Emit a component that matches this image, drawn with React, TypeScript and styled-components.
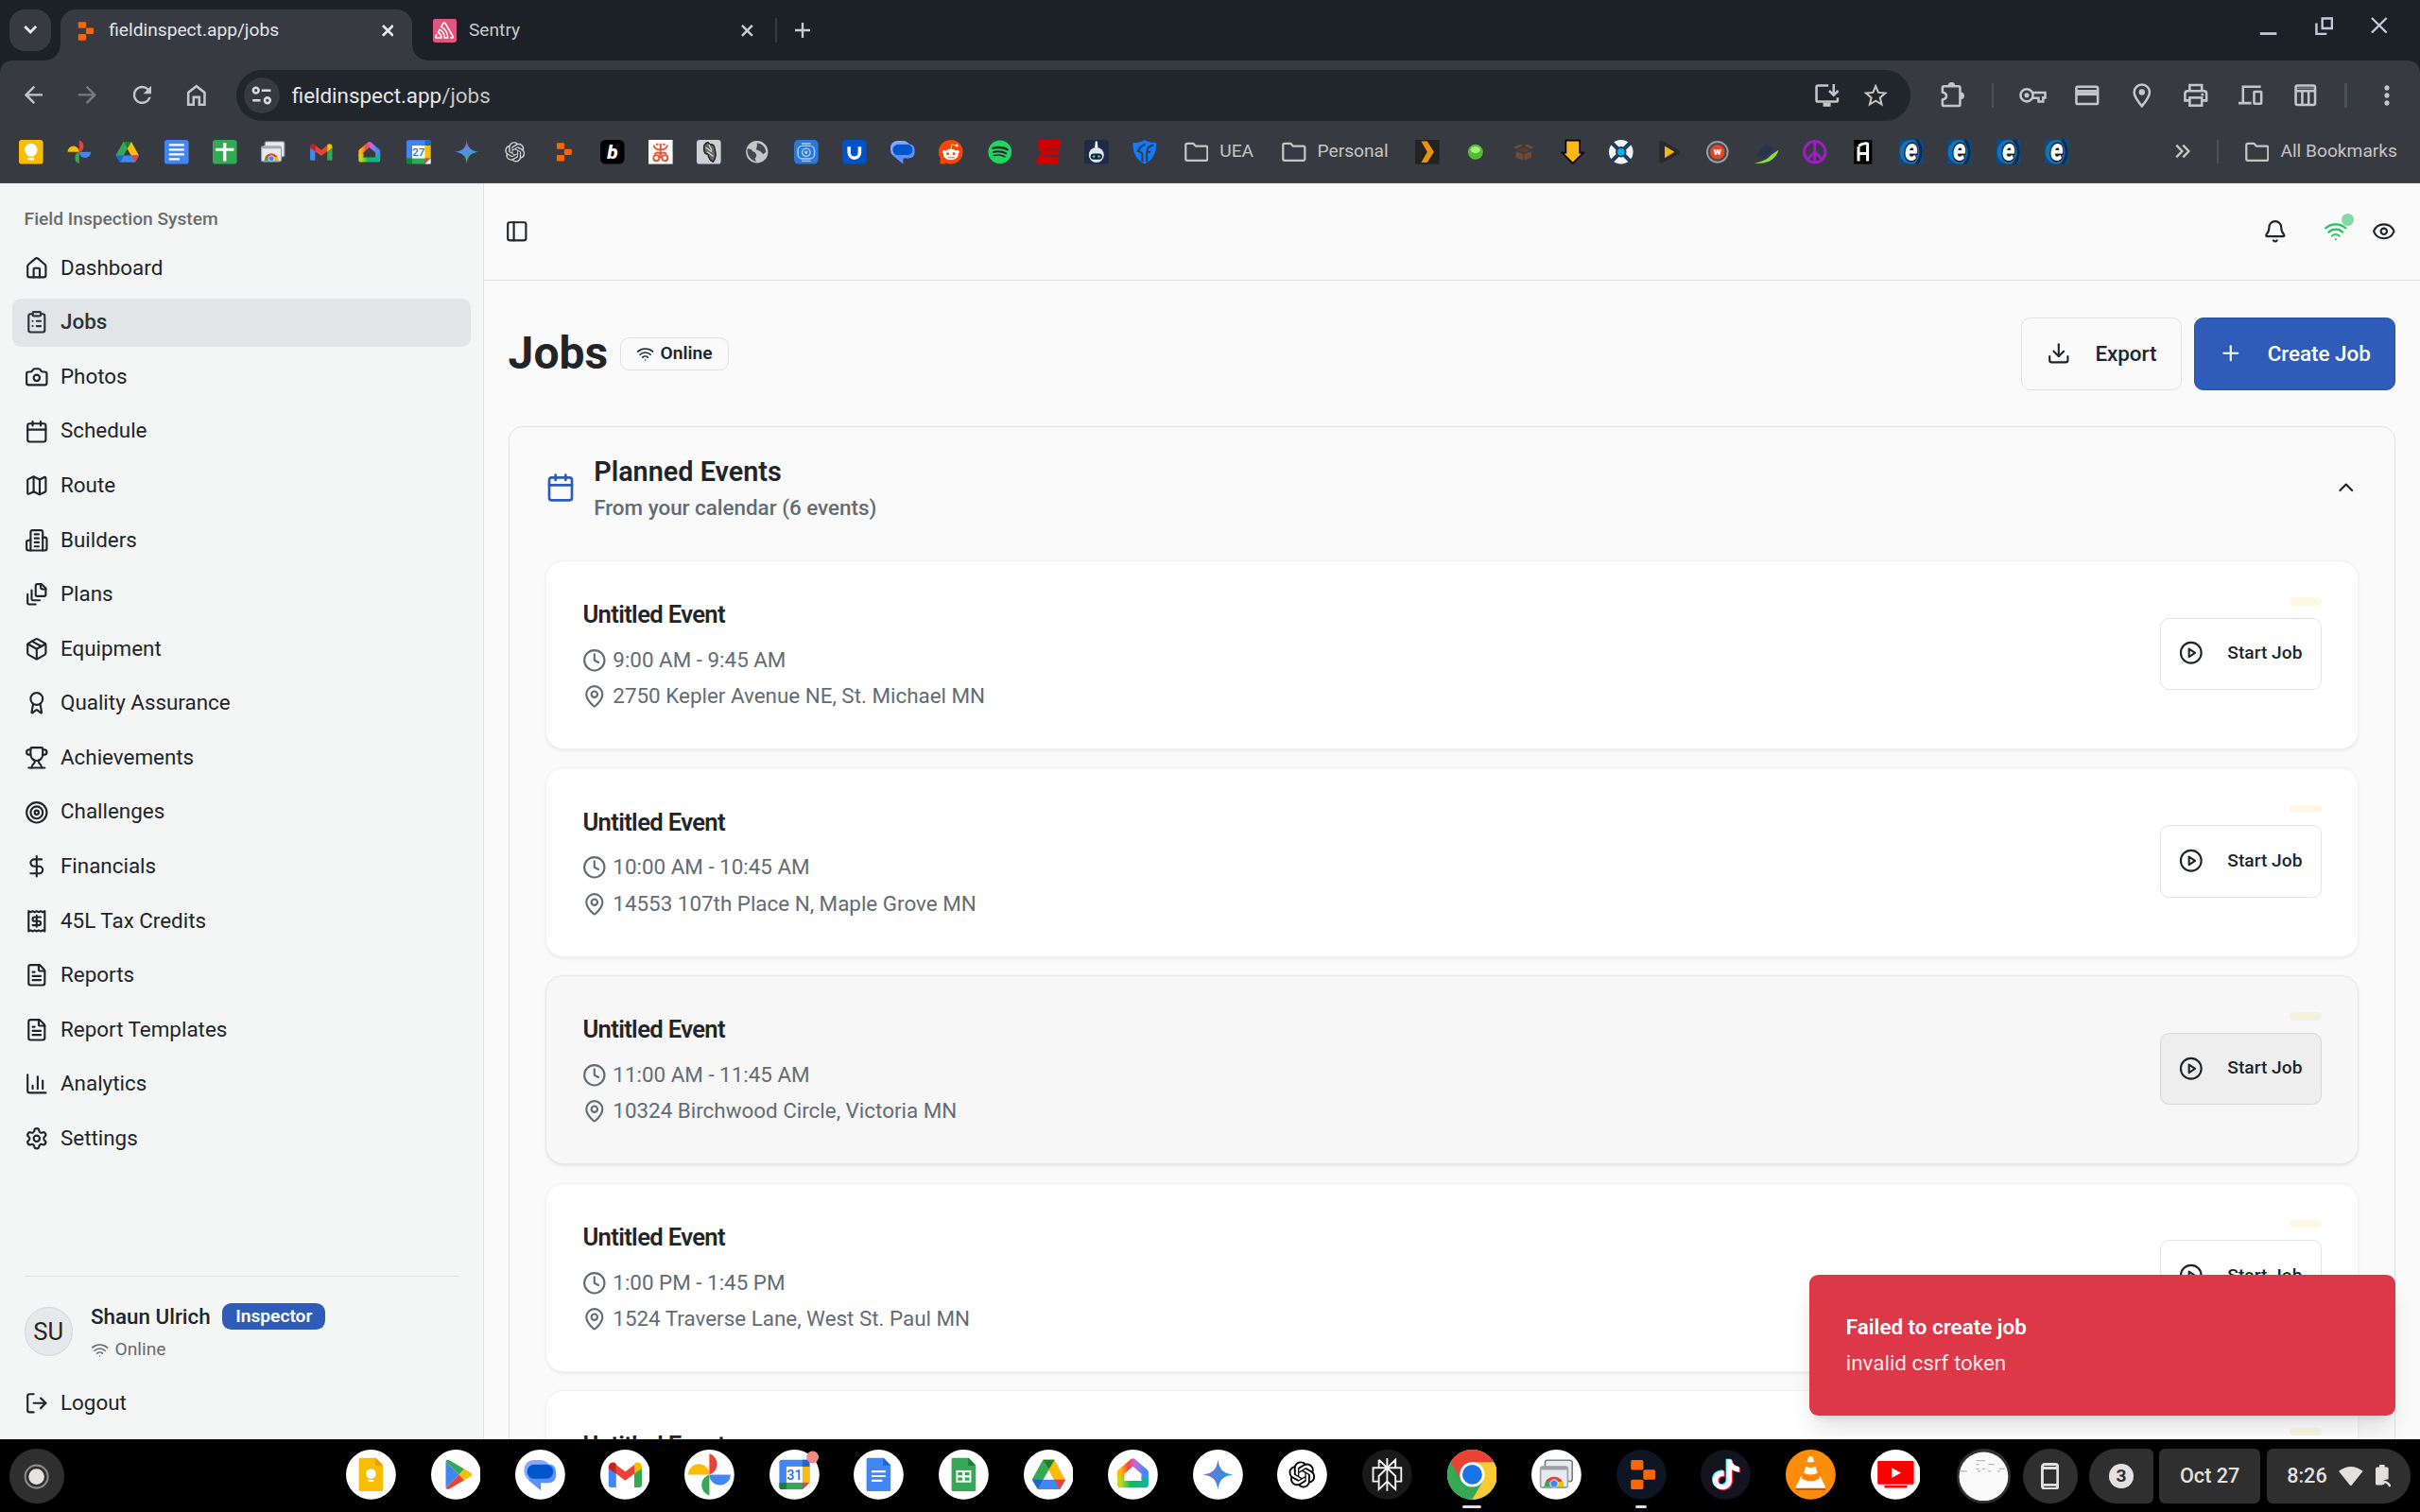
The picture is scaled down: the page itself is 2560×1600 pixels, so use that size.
import React from 'react';
import styled, { createGlobalStyle, css } from 'styled-components';
import {
  Award, Bell, Calendar, Camera, ChartColumn, ChevronUp, ClipboardList, Clock, DollarSign, Download, Eye,
  FileStack, FileText, House, LogOut, Map as MapIcon, MapPin, Package, PanelLeft, Plus, Settings, Target, Trophy, Wifi,
} from 'lucide-react';
import {
  MdArrowBack, MdArrowForward, MdRefresh, MdStarBorder, MdMoreVert,
} from 'react-icons/md';
import { RiOpenaiFill } from 'react-icons/ri';
import { SiSentry, SiTiktok } from 'react-icons/si';
import { FaRedditAlien, FaSpotify } from 'react-icons/fa';

const FONT = `Roboto, "Noto Sans", "Liberation Sans", sans-serif`;
const INK = '#212529';
const MUTED = '#636c75';
const LINE = '#dfe1e4';
const BLUE = '#2e5cb8';

/* Sizes are in the 1600x1000 logical pixels of the display; the page is scaled 1.6x. */
const GlobalStyle = createGlobalStyle`
  html, body { margin: 0; padding: 0; background: #000; }
  *, *::before, *::after { box-sizing: border-box; }
  svg { display: block; flex: none; }
  button { font: inherit; color: inherit; margin: 0; cursor: pointer; }
`;

const Screen = styled.div`
  zoom: 1.6;
  width: 1600px;
  height: 1000px;
  display: flex;
  flex-direction: column;
  overflow: hidden;
  font-family: ${FONT};
  font-size: 14px;
  line-height: 20px;
  color: ${INK};
  background: #1c2027;
`;

/* ---------- browser: tab strip ---------- */

const TabStrip = styled.div`
  height: 40px;
  flex: none;
  display: flex;
  align-items: flex-end;
  padding-left: 6px;
  background: #1c2027;
  color: #c7cad1;
  font-size: 12px;
`;

const TabSearch = styled.button`
  width: 28px;
  height: 28px;
  margin: 0 6px 6px 0;
  padding: 0;
  border: 0;
  border-radius: 10px;
  display: grid;
  place-items: center;
  background: #373a41;
  color: #e6e8ec;
`;

const TabBox = styled.div<{ $active?: boolean }>`
  position: relative;
  height: 34px;
  display: flex;
  align-items: center;
  padding-bottom: 5.4px;
  ${(p) =>
    p.$active
      ? css`
          width: 232.3px;
          padding-left: 8px;
          padding-right: 12px;
          padding-top: 0;
          background: #373a41;
          color: #e3e5ea;
          border-radius: 10px 10px 0 0;
          &::before, &::after {
            content: '';
            position: absolute;
            bottom: 0;
            width: 10px;
            height: 10px;
          }
          &::before { left: -10px; background: radial-gradient(circle at 0 0, transparent 9.6px, #373a41 10px); }
          &::after { right: -10px; background: radial-gradient(circle at 100% 0, transparent 9.6px, #373a41 10px); }
        `
      : css`
          width: 240px;
          padding-left: 13.7px;
          padding-right: 14px;
        `}
`;

const TabTitle = styled.span`
  flex: 1;
  margin-left: 8px;
  white-space: nowrap;
`;

const SentryBadge = styled.span`
  width: 16px;
  height: 16px;
  border-radius: 1.5px;
  display: grid;
  place-items: center;
  background: #e1567c;
  color: #fff;
`;

const StripDivider = styled.span`
  width: 1.5px;
  height: 16px;
  margin: 0 12px 12px 0;
  background: #363a42;
`;

const NewTab = styled.span`
  margin-bottom: 15px;
`;

const WindowControls = styled.div`
  margin-left: auto;
  align-self: flex-start;
  display: flex;
  gap: 25px;
  padding: 11px 21.3px 0 0;
  color: #c3cbdc;
`;

/* ---------- browser: toolbar ---------- */

const Toolbar = styled.div`
  height: 46px;
  flex: none;
  display: flex;
  align-items: center;
  padding: 0 4px;
  background: #373a41;
  border-radius: 8px 8px 0 0;
  color: #c3c6cf;
`;

const ToolSlot = styled.span<{ $dim?: boolean }>`
  width: 36px;
  height: 36px;
  display: grid;
  place-items: center;
  color: ${(p) => (p.$dim ? '#777a80' : 'inherit')};
`;

const ToolDivider = styled.span<{ $w: number }>`
  width: ${(p) => p.$w}px;
  display: grid;
  place-items: center;
  &::before { content: ''; width: 1.5px; height: 16px; background: #4c5058; }
`;

const Omnibox = styled.div`
  flex: 1;
  height: 34px;
  margin: 0 10px 0 8px;
  padding: 0 13.5px 0 5px;
  display: flex;
  align-items: center;
  border-radius: 17px;
  background: #21252c;
  color: #c7c5c4;
  font-size: 14px;
`;

const SiteInfo = styled.span`
  width: 24px;
  height: 24px;
  margin-right: 8px;
  border-radius: 12px;
  display: grid;
  place-items: center;
  background: #373a41;
  color: #d9dadd;
`;

const Url = styled.span`
  flex: 1;
  color: #e8e8ea;
  span { color: #c5c6c9; }
`;

const OmniActions = styled.span`
  display: flex;
  align-items: center;
  gap: 14px;
`;

/* ---------- browser: bookmarks ---------- */

const BookmarkBar = styled.div`
  height: 35.25px;
  flex: none;
  display: flex;
  align-items: center;
  gap: 16.03px;
  padding: 0 15px 6px 12.4px;
  background: #373a41;
  border-bottom: 1px solid #4b4948;
  color: #c7c5c4;
  font-size: 12px;
`;

const Folder = styled.span<{ $start?: number; $end?: number }>`
  display: flex;
  align-items: center;
  gap: 7.5px;
  margin-left: ${(p) => p.$start ?? 0}px;
  padding-right: ${(p) => p.$end ?? 0}px;
  white-space: nowrap;
`;

const BarEnd = styled.span`
  margin-left: auto;
  display: flex;
  align-items: center;
`;

const BarRule = styled.span`
  width: 1.5px;
  height: 16px;
  margin: 0 17.2px 0 17.6px;
  background: #4c5058;
`;

/* ---------- page ---------- */

const Page = styled.div`
  position: relative;
  flex: 1;
  min-height: 0;
  display: flex;
  overflow: hidden;
  background: #fafafa;
`;

const Sidebar = styled.aside`
  width: 320px;
  flex: none;
  display: flex;
  flex-direction: column;
  padding: 8px;
  background: #f4f6f5;
  border-right: 1px solid ${LINE};
`;

const GroupLabel = styled.div`
  height: 32px;
  padding: 0 8px;
  display: flex;
  align-items: center;
  font-size: 12px;
  font-weight: 500;
  color: #676c6f;
`;

const NavList = styled.nav`
  flex: 1;
  display: flex;
  flex-direction: column;
  gap: 4px;
`;

const NavItem = styled.a<{ $active?: boolean }>`
  height: 32px;
  padding: 0 8px;
  display: flex;
  align-items: center;
  gap: 8px;
  border-radius: 6px;
  font-weight: ${(p) => (p.$active ? 500 : 400)};
  color: ${(p) => (p.$active ? '#2d3338' : INK)};
  background: ${(p) => (p.$active ? '#e1e5e8' : 'transparent')};
  span { padding-bottom: 1.2px; }
`;

const UserRow = styled.div`
  margin: 0 8px;
  height: 68px;
  padding-top: 17px;
  display: flex;
  gap: 12px;
  border-top: 1px solid #e1e4e5;
`;

const Avatar = styled.div`
  width: 32px;
  height: 32px;
  margin-top: 3px;
  border-radius: 50%;
  border: 1px solid #d3d6d9;
  background: #e6e9ec;
  display: grid;
  place-items: center;
  font-size: 16px;
`;

const UserText = styled.div`
  display: flex;
  flex-direction: column;
  gap: 5px;
`;

const NameLine = styled.div`
  height: 18px;
  display: flex;
  align-items: center;
  gap: 8px;
  font-weight: 500;
`;

const RoleTag = styled.span`
  height: 17.5px;
  padding: 0 8.6px;
  border-radius: 6px;
  background: ${BLUE};
  color: #fff;
  font-size: 12px;
  font-weight: 600;
  line-height: 17px;
`;

const Status = styled.div`
  display: flex;
  align-items: center;
  gap: 4px;
  font-size: 12px;
  line-height: 16px;
  color: ${MUTED};
`;

const Main = styled.main`
  flex: 1;
  min-width: 0;
  display: flex;
  flex-direction: column;
`;

const TopBar = styled.header`
  height: 64.4px;
  flex: none;
  display: flex;
  align-items: center;
  padding: 0 16px 0 14px;
  border-bottom: 1px solid #dbdde1;
`;

const TopActions = styled.div`
  margin-left: auto;
  display: flex;
  align-items: center;
  gap: 16px;
`;

const BellSlot = styled.span`
  margin-right: 8px;
`;

const Connection = styled.span`
  position: relative;
  color: #22c55e;
  &::after {
    content: '';
    position: absolute;
    top: -4px;
    right: -4px;
    width: 8px;
    height: 8px;
    border-radius: 50%;
    background: #80dca2;
  }
`;

const Body = styled.div`
  flex: 1;
  min-height: 0;
  padding: 24.3px 16px 0;
  display: flex;
  flex-direction: column;
  gap: 24px;
  overflow: hidden;
`;

const TitleRow = styled.div`
  flex: none;
  display: flex;
  align-items: center;
  gap: 8px;
`;

const Title = styled.h1`
  margin: 0;
  padding-bottom: 1.2px;
  font-size: 30px;
  line-height: 36px;
  font-weight: 700;
`;

const OnlineTag = styled.span`
  height: 22px;
  margin-right: auto;
  padding: 0 10px;
  display: flex;
  align-items: center;
  gap: 4px;
  border: 1px solid ${LINE};
  border-radius: 6px;
  font-size: 12px;
  font-weight: 600;
`;

const Button = styled.button<{ $primary?: boolean; $small?: boolean; $pressed?: boolean }>`
  height: 48px;
  padding: 0 ${(p) => (p.$small ? 12 : 16)}px 0.8px ${(p) => (p.$small ? 12 : p.$primary ? 16 : 16.6)}px;
  display: flex;
  align-items: center;
  gap: 16px;
  white-space: nowrap;
  font-size: ${(p) => (p.$small ? 12 : 14)}px;
  font-weight: 500;
  border-radius: 6px;
  border: 1px solid ${(p) => (p.$primary ? '#294f9d' : p.$pressed ? '#d5d6d8' : '#e2e3e5')};
  background: ${(p) => (p.$primary ? BLUE : p.$pressed ? '#eeeeee' : 'transparent')};
  color: ${(p) => (p.$primary ? '#fff' : INK)};
`;

const Panel = styled.section`
  flex: none;
  border: 1px solid ${LINE};
  border-radius: 9px;
`;

const PanelHead = styled.div`
  padding: 16px 24px;
  display: flex;
  align-items: center;
  gap: 12px;
  color: ${INK};
`;

const PanelTitles = styled.div`
  flex: 1;
  padding-bottom: 1px;
  h2 { margin: 0; font-size: 18px; line-height: 27px; font-weight: 600; }
  p { margin: 0; font-weight: 500; color: ${MUTED}; }
`;

const EventList = styled.div`
  padding: 8px 24px 24px;
  display: flex;
  flex-direction: column;
  gap: 12px;
`;

const EventCard = styled.article<{ $hover?: boolean }>`
  display: flex;
  justify-content: space-between;
  padding: 24px 24px 25px;
  border-radius: 12px;
  border: 1px solid ${(p) => (p.$hover ? '#e6e7e8' : '#f0f1f2')};
  background: ${(p) => (p.$hover ? '#f7f7f7' : '#fff')};
  box-shadow: 0 1px 2px rgba(0, 0, 0, ${(p) => (p.$hover ? 0.08 : 0.06)});
`;

const EventTitle = styled.h3`
  margin: 0 0 8px;
  font-size: 16px;
  line-height: 23px;
  font-weight: 600;
  letter-spacing: -0.4px;
`;

const EventMeta = styled.div`
  display: flex;
  align-items: center;
  gap: 4px;
  color: ${MUTED};
  & + & { margin-top: 4px; }
  svg { margin-top: 1px; }
`;

const EventSide = styled.div`
  display: flex;
  flex-direction: column;
  align-items: flex-end;
  gap: 8px;
`;

const Pill = styled.span<{ $hover?: boolean }>`
  width: 21px;
  height: 5.3px;
  border-radius: 3px;
  background: ${(p) => (p.$hover ? '#f8f0de' : '#fff7e4')};
`;

const Toast = styled.div`
  position: absolute;
  right: 16px;
  bottom: 16px;
  width: 388px;
  height: 93px;
  padding: 24.5px;
  border-radius: 6px;
  background: #dd3848;
  color: #fff;
  box-shadow: 0 10px 15px -3px rgba(0, 0, 0, 0.12), 0 4px 6px -4px rgba(0, 0, 0, 0.12);
  strong { display: block; font-weight: 600; margin-bottom: 4px; }
  span { color: rgba(255, 255, 255, 0.88); }
`;

/* ---------- shelf ---------- */

const Shelf = styled.div`
  height: 48px;
  flex: none;
  display: flex;
  align-items: center;
  padding: 0 6px 0 6.4px;
  background: #000;
  border-top: 1px solid #0c0c0c;
  color: #e3e0e0;
  font-size: 13.5px;
  font-weight: 500;
`;

const Launcher = styled.span`
  width: 36px;
  height: 36px;
  border-radius: 50%;
  display: grid;
  place-items: center;
  background: #2f2f2f;
`;

const ShelfApps = styled.div`
  display: flex;
  gap: 23px;
  margin-left: 186.3px;
`;

const ShelfApp = styled.span<{ $mark?: number }>`
  position: relative;
  width: 33px;
  height: 33px;
  margin-bottom: 2px;
  ${(p) =>
    p.$mark &&
    css`
      &::after {
        content: '';
        position: absolute;
        left: calc(50% - ${p.$mark / 2}px);
        bottom: -5.5px;
        width: ${p.$mark}px;
        height: 2px;
        border-radius: 1px;
        background: #dfe0e6;
      }
    `}
`;

const Tray = styled.div`
  margin-left: auto;
  display: flex;
  align-items: center;
  gap: 4px;
`;

const TrayCircle = styled.span<{ $gap?: number }>`
  width: 36px;
  height: 36px;
  margin-right: ${(p) => p.$gap ?? 0}px;
  border-radius: 50%;
  display: grid;
  place-items: center;
  background: #2f2f2f;
`;

const TrayPill = styled.span<{ $w: number; $left?: boolean; $right?: boolean }>`
  width: ${(p) => p.$w}px;
  height: 36px;
  display: flex;
  align-items: center;
  justify-content: center;
  gap: 8px;
  background: #2f2f2f;
  border-radius: ${(p) => (p.$left ? '18px 4px 4px 18px' : p.$right ? '4px 18px 18px 4px' : '4px')};
`;

const Count = styled.span`
  width: 16px;
  height: 16px;
  border-radius: 50%;
  display: grid;
  place-items: center;
  background: #e3e0e0;
  color: #2f2f2f;
  font-size: 12px;
  line-height: 16px;
  font-weight: 700;
`;

/* ---------- small line glyphs ---------- */

const Cross = ({ s = 8, w = 1.6 }: { s?: number; w?: number }) => (
  <svg width={s} height={s} viewBox={`0 0 ${s} ${s}`} fill="none" stroke="currentColor" strokeWidth={w}>
    <path d={`M.6 .6L${s - 0.6} ${s - 0.6}M${s - 0.6} .6L.6 ${s - 0.6}`} />
  </svg>
);

const FolderIcon = () => (
  <svg width="16" height="16" viewBox="0 0 16 16" fill="none" stroke="currentColor" strokeWidth="1.4" strokeLinejoin="round">
    <path d="M.8 3.4q0-1 1-1h4l1.7 1.8h6.7q1 0 1 1v7.5q0 1-1 1H1.8q-1 0-1-1z" />
  </svg>
);

const PlayCircle = () => (
  <svg width="16" height="16" viewBox="0 0 24 24" fill="none" stroke="currentColor" strokeWidth="2" strokeLinecap="round" strokeLinejoin="round">
    <circle cx="12" cy="12" r="10.2" />
    <path d="M10 8l6 4-6 4z" />
  </svg>
);

const BuildingIcon = () => (
  <svg width="16" height="16" viewBox="0 0 24 24" fill="none" stroke="currentColor" strokeWidth="2" strokeLinecap="round" strokeLinejoin="round">
    <path d="M6 22V4a2 2 0 0 1 2-2h8a2 2 0 0 1 2 2v18Z" />
    <path d="M6 12H4a2 2 0 0 0-2 2v6a2 2 0 0 0 2 2h2M18 9h2a2 2 0 0 1 2 2v9a2 2 0 0 1-2 2h-2M10 6h4M10 10h4M10 14h4M10 18h4" />
  </svg>
);

const FilesIcon = () => (
  <svg width="16" height="16" viewBox="0 0 24 24" fill="none" stroke="currentColor" strokeWidth="2" strokeLinecap="round" strokeLinejoin="round">
    <path d="M21 7h-3a2 2 0 0 1-2-2V2" />
    <path d="M21 6v6.500c0 .8-.7 1.500-1.500 1.500h-7c-.8 0-1.500-.7-1.500-1.500v-9c0-.8.7-1.500 1.500-1.500H17Z" />
    <path d="M7 8v8.800c0 .3.200.6.400.8.200.2.500.4.800.4H15" />
    <path d="M3 12v8.800c0 .3.200.6.400.8.200.2.500.4.800.4H11" />
  </svg>
);

const ReceiptIcon = () => (
  <svg width="16" height="16" viewBox="0 0 24 24" fill="none" stroke="currentColor" strokeWidth="2" strokeLinecap="round" strokeLinejoin="round">
    <path d="M4 2v20l2-1 2 1 2-1 2 1 2-1 2 1 2-1 2 1V2l-2 1-2-1-2 1-2-1-2 1-2-1-2 1Z" />
    <path d="M16 8h-6a2 2 0 1 0 0 4h4a2 2 0 1 1 0 4H8M12 17.5v-11" />
  </svg>
);

const Line = ({ children, w = 16, h = 16 }: { children: React.ReactNode; w?: number; h?: number }) => (
  <svg width={w} height={h} viewBox={`0 0 ${w} ${h}`} fill="none" stroke="currentColor" strokeWidth="1.6">
    {children}
  </svg>
);

const HomeLine = () => (
  <Line><path d="M2.6 14.2V6.2L8 2l5.400 4.200v8H9.900V9.300H6.100v4.900z" /></Line>
);
const TuneLine = () => (
  <Line>
    <circle cx="4.2" cy="4.8" r="1.8" /><path d="M8 4.8h6M2 11.4h5.2" /><circle cx="11.8" cy="11.4" r="1.8" />
  </Line>
);
const InstallLine = () => (
  <Line w={17}>
    <path d="M9.5 1.6H2.6q-1 0-1 1v8.600q0 1 1 1h12q1 0 1-1V9.500" /><path d="M6 14.2h5" strokeWidth="2.6" />
    <path d="M13 .6v7M10 5l3 3 3-3" />
  </Line>
);
const PuzzleLine = () => (
  <Line w={17} h={18}>
    <path d="M1.8 4.3q0-1 1-1h9.600q1 0 1 1v11q0 1-1 1H2.800q-1 0-1-1v-3.200c3.400-.5 3.400-4.200 0-4.700z" strokeLinejoin="round" />
    <path d="M5.800 3a2 2 0 0 1 4 0zM13.800 7.600a2 2 0 0 1 0 4z" fill="currentColor" strokeWidth=".8" />
  </Line>
);
const KeyLine = () => (
  <Line w={18}>
    <circle cx="5" cy="8" r="4.1" /><circle cx="5" cy="8" r="1.6" fill="currentColor" stroke="none" />
    <path d="M8.700 6.200h8.500v3.400h-1.400v2.600h-3V9.800H8.800" />
  </Line>
);
const CardLine = () => (
  <Line><rect x=".9" y="2.4" width="14.2" height="11.4" rx="1" /><path d="M1 5.200h14" /><path d="M1 7h14" strokeWidth="2.4" /></Line>
);
const PinLine = () => (
  <Line><path d="M8 15.200C4.600 11.300 2.900 8.600 2.900 6a5.100 5.100 0 0 1 10.200 0c0 2.600-1.700 5.300-5.100 9.200z" /><circle cx="8" cy="5.900" r="2" fill="currentColor" stroke="none" /></Line>
);
const PrintLine = () => (
  <Line>
    <path d="M4 5V1.300h8V5M4 11.500H.9V7q0-1.800 1.800-1.800h10.600q1.800 0 1.800 1.800v4.500H12" /><rect x="4" y="9.600" width="8" height="5.200" /><circle cx="12.400" cy="7.600" r=".9" fill="currentColor" stroke="none" />
  </Line>
);
const DevicesLine = () => (
  <Line><path d="M14.800 2.400H3v10M0 13.200h8.500" /><rect x="10.300" y="5.600" width="4.800" height="8" rx=".4" /></Line>
);
const TableLine = () => (
  <Line><rect x="1.600" y="1.600" width="12.800" height="12.800" rx="1.200" /><path d="M1.600 5.200h12.800M5.900 5.200v9M10.100 5.200v9" /><path d="M2 3.300h12" strokeWidth="1" opacity=".5" /></Line>
);

/* ---------- product marks, centred on 0,0 ---------- */

const Replit = () => (
  <g fill="#fb6505">
    <rect x="-7" y="-9.600" width="8.300" height="6.500" rx="1" />
    <rect x="1.200" y="-3.200" width="8" height="6.500" rx="1" />
    <rect x="-7" y="3.300" width="8.300" height="6.500" rx="1" />
  </g>
);

const PhotosMark = () => (
  <g>
    <path d="M0 0V-13.800A7.200 7.200 0 0 1 0 0z" fill="#ea4335" />
    <path d="M0 0H-14A7 7 0 0 1 0 0z" fill="#fbbc04" />
    <path d="M0 0H14A7 7 0 0 1 0 0z" fill="#4285f4" />
    <path d="M0 0V13.800A7.200 7.200 0 0 1 0 0z" fill="#34a853" />
  </g>
);

const DriveMark = () => (
  <g>
    <path d="M-3.800-9.800H3.800L-7.200 9.600-11 3.200z" fill="#34a853" />
    <path d="M-3.800-9.800H3.800L11 3.600H3.600z" fill="#fbbc04" />
    <path d="M-3.800-9.800H3.800L0-3.200z" fill="#188038" />
    <path d="M-7.200 9.800L-3.600 3.400H11L7.400 9.800z" fill="#4285f4" />
    <path d="M-11 3.400h7.400L-7.200 9.800z" fill="#1967d2" />
    <path d="M3.600 3.400H11L7.400 9.800z" fill="#ea4335" />
  </g>
);

const GmailMark = () => (
  <g>
    <path d="M-11-5V7q0 1.500 1.500 1.500H-6V-3z" fill="#4285f4" />
    <path d="M11-5V7q0 1.500-1.500 1.500H6V-3z" fill="#34a853" />
    <path d="M-6-6.500L0-2 6-6.500V-.5L0 4-6-.5z" fill="#ea4335" />
    <path d="M-11-5c0-3 3-3.800 5-2.200V-.5l-5-3.500z" fill="#c5221f" />
    <path d="M11-5c0-3-3-3.800-5-2.200V-.5l5-3.500z" fill="#fbbc04" />
  </g>
);

const HomeMark = ({ id }: { id: string }) => (
  <g>
    <defs>
      <linearGradient id={`${id}a`} x1="0" y1="0" x2="1" y2="0">
        <stop offset="0" stopColor="#fbbc04" /><stop offset=".3" stopColor="#ff4641" /><stop offset=".6" stopColor="#c06ae0" /><stop offset="1" stopColor="#3b8cff" />
      </linearGradient>
      <linearGradient id={`${id}b`} x1="0" y1="0" x2="1" y2="0">
        <stop offset="0" stopColor="#c5d81c" /><stop offset=".4" stopColor="#0ebc5f" /><stop offset="1" stopColor="#11b39a" />
      </linearGradient>
    </defs>
    <path d="M-8 3V-1.500L0-8.400 8-1.500V3" fill="none" stroke={`url(#${id}a)`} strokeWidth="4.600" strokeLinejoin="round" />
    <path d="M-8 1.500V6.400H8V1.500" fill="none" stroke={`url(#${id}b)`} strokeWidth="4.600" strokeLinejoin="round" />
  </g>
);

const StarMark = ({ id, warm }: { id: string; warm?: boolean }) => (
  <g>
    <defs>
      <linearGradient id={id} x1="0" y1={warm ? '0' : '.3'} x2={warm ? '.3' : '1'} y2={warm ? '1' : '.6'}>
        <stop offset={warm ? '.1' : '0'} stopColor={warm ? '#ea4335' : '#9a6fc4'} /><stop offset=".5" stopColor={warm ? '#4a90f5' : '#4a83dd'} /><stop offset="1" stopColor={warm ? '#34b36a' : '#1ba6cf'} />
      </linearGradient>
    </defs>
    <path d="M0-10C.8-3.500 3.500-.8 10 0 3.500.8.8 3.500 0 10-.8 3.500-3.500.8-10 0-3.500-.8-.8-3.500 0-10z" fill={`url(#${id})`} />
  </g>
);

const ChromeMark = ({ r = 16.5 }: { r?: number }) => (
  <g transform={`scale(${r / 16.5})`}>
    <circle r="16.500" fill="#34a853" />
    <path d="M-14.300-8.250A16.500 16.500 0 0 1 14.300-8.250H0z" fill="#ea4335" />
    <path d="M-14.300-8.250L-7 4.200 0 0V-8.250z" fill="#ea4335" />
    <path d="M14.300-8.250A16.500 16.500 0 0 1 0 16.500L7.200 4.100 0-8.250z" fill="#fbc934" />
    <circle r="8.200" fill="#fff" /><circle r="6.500" fill="#1a73e8" />
  </g>
);

const MessagesMark = () => (
  <g>
    <rect x="-10.500" y="-9.600" width="17" height="14" rx="6" fill="#86a9ff" />
    <path d="M-6-7H5q5.500 0 5.500 5.500V0q0 5.500-5.500 5.500H.5V10.500L-7.500 4z" fill="#5c8fff" />
    <rect x="-8.600" y="-6.500" width="17.200" height="9.200" rx="4.400" fill="#0056cc" />
  </g>
);

const CalendarMark = ({ day }: { day: string }) => (
  <g>
    <rect x="-10" y="-9.800" width="20" height="19.600" rx="1.600" fill="#4285f4" />
    <path d="M5.300-5.300H10V5.300H5.300z" fill="#fbbc04" /><path d="M-5.300 5.300H5.300V9.800H-5.300z" fill="#34a853" />
    <path d="M5.300-9.800H8.400q1.600 0 1.600 1.600v2.900H5.300z" fill="#1967d2" /><path d="M-10 5.300h4.700V9.800H-8.400q-1.600 0-1.600-1.600z" fill="#188038" />
    <path d="M5.300 5.300H10L5.300 9.800z" fill="#ea4335" /><path d="M10 5.300V10H5.300z" fill="#fff" />
    <rect x="-5.300" y="-5.300" width="10.600" height="10.600" fill="#fff" />
    <text x="0" y="3.400" textAnchor="middle" fontFamily={FONT} fontWeight="500" fontSize="9" fill="#1a73e8">{day}</text>
  </g>
);

const StoreMark = () => (
  <g>
    <rect x="-7.500" y="-9.500" width="18" height="14" rx="1.500" fill="#e8eaed" stroke="#7a7d80" strokeWidth="1" />
    <rect x="-10.500" y="-5.200" width="18" height="13.800" rx="1.500" fill="#e8eaed" stroke="#9aa0a6" strokeWidth="1" />
    <path d="M-10-4.700h17v1.600h-17z" fill="#9aa0a6" />
    <path d="M-8 8a6.500 6.500 0 0 1 13 0z" fill="#34a853" /><path d="M-7 4.500a6.500 6.500 0 0 1 11 0L-1.500 6z" fill="#ea4335" /><path d="M4 4.500q1 1.500 1 3.500H0V5z" fill="#fbbc04" />
    <circle cx="-1.500" cy="6" r="2.600" fill="#4285f4" stroke="#fff" strokeWidth=".6" /><path d="M-10 8.100h17v.5h-17z" fill="#9aa0a6" />
  </g>
);

const Doc = ({ c, d, children }: { c: string; d: string; children: React.ReactNode }) => (
  <g>
    <path d="M-7-11H3.500L8-6.200V10q0 1-1 1H-7q-1 0-1-1V-10q0-1 1-1z" fill={c} />
    <path d="M3-11L8-6H3z" fill={d} />
    {children}
  </g>
);

const ShelfIcon = ({ bg = '#fff', mark, children }: { bg?: string; mark?: number; children?: React.ReactNode }) => (
  <ShelfApp $mark={mark}>
    <svg width="33" height="33" viewBox="-16.500 -16.500 33 33">
      <circle r="16.500" fill={bg} />
      {children}
    </svg>
  </ShelfApp>
);

/* A 16px favicon drawn around its centre. */
const Fav = ({ span = 16, children }: { span?: number; children: React.ReactNode }) => (
  <svg width="16" height="16" overflow="visible" viewBox={`${-span / 2} ${-span / 2} ${span} ${span}`}>{children}</svg>
);

const Tile = ({ c, r = 2 }: { c: string; r?: number }) => <rect x="-8" y="-8" width="16" height="16" rx={r} fill={c} />;

const Letter = ({ ch, c = '#fff', size = 12, y = 4, italic }: { ch: string; c?: string; size?: number; y?: number; italic?: boolean }) => (
  <text x="0" y={y} textAnchor="middle" fontFamily={FONT} fontWeight="900" fontStyle={italic ? 'italic' : 'normal'} fontSize={size} fill={c}>{ch}</text>
);

const ESwirl = () => (
  <Fav>
    <Tile c="#0f4a80" r={0} /><ellipse rx="7.600" ry="8" fill="#1273b8" />
    <path d="M3.500-8Q9.500 0 3.500 8" fill="none" stroke="#0c2d52" strokeWidth="2" />
    <g transform="scale(1,1.300)">
      <text x="0" y="4.600" textAnchor="middle" fontFamily={FONT} fontWeight="900" fontStyle="italic" fontSize="16" fill="#fff" stroke="#0a1c30" strokeWidth="1.400" paintOrder="stroke">e</text>
    </g>
  </Fav>
);

const Bookmarks = () => (
  <BookmarkBar>
    <Fav><Tile c="#fbbc04" /><circle cy="-1.400" r="4.200" fill="#fff" /><path d="M-2 2h4v3.400h-4z" fill="#fff" /><path d="M-2.400 3h4.800v.8h-4.800z" fill="#fbbc04" /></Fav>
    <Fav span={29}><PhotosMark /></Fav>
    <Fav span={23}><DriveMark /></Fav>
    <Fav><Tile c="#4285f4" /><path d="M-5-4.600h10M-5-1.500h10M-5 1.600h10M-5 4.700h7" stroke="#fff" strokeWidth="1.400" /></Fav>
    <Fav><Tile c="#34a853" /><path d="M0-6V6M-6-1.600H6" stroke="#fff" strokeWidth="2" /></Fav>
    <Fav span={22}><StoreMark /></Fav>
    <Fav span={24}><GmailMark /></Fav>
    <Fav span={23}><g transform="translate(0,1)"><HomeMark id="fh" /></g></Fav>
    <Fav span={20}><CalendarMark day="27" /></Fav>
    <Fav span={20.500}><StarMark id="fs" warm /></Fav>
    <RiOpenaiFill size={16} color="#d0d0d0" />
    <Fav span={26}><Replit /></Fav>
    <Fav><Tile c="#000" r={3.500} /><Letter ch="b" italic size={13} y={4.600} /></Fav>
    <Fav>
      <Tile c="#fff" r={0} />
      <g fill="none" stroke="#e8542f" strokeWidth="1.200">
        <path d="M0-4.500V4M-4.500-4.500Q-4-1.500 0-1.500 4-1.500 4.500-4.500M-4 1.500Q-2-.5 0 1.500 2-.5 4 1.500" />
        <circle cx="-2.800" cy="4" r="1.900" /><circle cx="2.800" cy="4" r="1.900" />
        <path d="M-3-5h1.500M1.500-5H3M-.8-5h1.600" />
      </g>
    </Fav>
    <Fav>
      <Tile c="#cfd0d1" /><path d="M-2.500-5q2-2.500 3 0 3.500-.5 3.500 3.500 1.500 4-1 8-3-1-3.500-5-3.500 0-2.500-6z" fill="#666" stroke="#222" strokeWidth=".9" />
      <path d="M-2-3l4 3M-1 0l4 3M0-5l2 4M3-6l1-1M-4-5l-1-1" stroke="#d8d8d8" strokeWidth=".8" />
    </Fav>
    <Fav><circle r="7.300" fill="#c4c6ca" /><path d="M-6.500-2q3-.5 3.500 1.500 2 .5 2.500 2 .5 2-1 2.500l1 2.500Q-5 5-6.200 1zM0-6Q5-5.500 6 0L4 1.500Q3-.5 1-1-1.500-1.500 0-3.500z" fill="#44474d" /></Fav>
    <Fav>
      <Tile c="#2b78d6" r={3} />
      <g fill="none" stroke="#a9d0ff" strokeWidth=".9"><rect x="-5.500" y="-4" width="11" height="8.500" rx="3" /><circle r="2.600" cy=".3" /><circle r=".6" cy=".3" /><path d="M-3-5.500h6M-3 6h6" /></g>
    </Fav>
    <Fav><Tile c="#0052cc" r={2.500} /><path d="M-3.500-3.500V.5a3.500 3.500 0 0 0 7 0V-3.500" fill="none" stroke="#fff" strokeWidth="2.200" /></Fav>
    <Fav span={21}><MessagesMark /></Fav>
    <Fav><circle r="8" fill="#ff4500" /><path d="M-7 8v-4l4 4z" fill="#ff4500" /><g transform="translate(-6,-6)"><FaRedditAlien size={12} color="#fff" /></g></Fav>
    <Fav><circle r="7" fill="#23262b" /><g transform="translate(-8,-8)"><FaSpotify size={16} color="#1ed760" /></g></Fav>
    <Fav><path d="M-7-8H8L7.600-2.600H-1L-1.200-1.400H7.400L7 2H-1.800L-2.100 3.200H6.900L6.500 8H-8L-6.800 3.200H-5.400L-4.700-1.400H-7.200L-6.900-2.600H-6z" fill="#d00000" /></Fav>
    <Fav>
      <Tile c="#1b2b49" r={2} /><path d="M-.6-7h1.200l.4 4h-2z" fill="#fff" /><circle cy="2" r="5" fill="#dfe6ea" /><rect x="-3.800" y="1" width="7.600" height="4" rx="2" fill="#0c2330" />
      <circle cx="-1.700" cy="3" r=".9" fill="#35c3d1" /><circle cx="1.700" cy="3" r=".9" fill="#35c3d1" />
    </Fav>
    <Fav><path d="M-7.800-6Q-3-6 0-8 3-6 7.800-6 8 4 0 8-8 4-7.800-6z" fill="#0d7cff" /><path d="M-4.500 0Q-3-4 .5-5M-1.500 6.500V1L-3.500-.5M6-4.500Q1.500-4 1.500 0V6.500M1.500 0H4" fill="none" stroke="#373a41" strokeWidth="1.300" /></Fav>
    <Folder $start={2} $end={2.600}><FolderIcon />UEA</Folder>
    <Folder $end={1.600}><FolderIcon />Personal</Folder>
    <Fav><Tile c="#23231f" r={0} /><path d="M-4-7H0L4.500 0 0 7H-4L0 0z" fill="#e8930c" /></Fav>
    <Fav><circle r="5" fill="#4fc02b" /><ellipse cy="-1.500" rx="3.200" ry="2.200" fill="#a5f07c" /></Fav>
    <Fav>
      <g fill="#6e4a37" stroke="#373a41" strokeWidth=".7"><path d="M-5.500-1L0 .8V6L-5.500 4zM5.500-1L0 .8V6l5.500-2z" /><path d="M-5.500-1L0-3.500 5.500-1 0 1z" fill="#54402f" /><path d="M-7.500-3.500L-2-5.500 0-4l-5 2.500zM7.500-3.500L2-5.500 0-4l5 2.500z" /></g>
    </Fav>
    <Fav><path d="M-4.600-7.600h9.200V.5H7L0 7.500-7 .5h2.400z" fill="#fdb913" stroke="#000" strokeWidth="1" /></Fav>
    <Fav><circle r="8" fill="#f2f2f2" /><path d="M-6-6L6 6M6-6L-6 6" stroke="#1b3e5c" strokeWidth="2.600" /><circle r="3.600" fill="#1b3e5c" /><circle r="2.400" fill="#00b5f0" /></Fav>
    <Fav><path d="M-6.500-6.500Q-6-8-4-7L6-1.500Q8 0 6 1.500L-4 7Q-6 8-6.500 6.500z" fill="#282b2e" /><path d="M-3-4L3.500 0-3 4z" fill="#fbb317" /></Fav>
    <Fav><circle r="6.800" fill="#44474a" stroke="#9b9d9f" strokeWidth="1.200" /><circle r="4.800" fill="#e8432c" /><Letter ch="w" size={7} y={2} /></Fav>
    <Fav><path d="M-7 2L0-5 4-2-2 5z" fill="#26344f" /><path d="M-8 7.500Q0 6 3 2L8-1.500Q7 3 2 6-3 8-8 7.500z" fill="#8fdc3a" /></Fav>
    <Fav><circle r="7" fill="none" stroke="#9b1fc4" strokeWidth="1.900" /><path d="M0-7V7M0 0L-4.800 4.800M0 0L4.800 4.800" stroke="#9b1fc4" strokeWidth="1.700" /></Fav>
    <Fav><rect x="-6" y="-8" width="12" height="16" fill="#000" /><path d="M-3 6V-3.500M3 6V-6M-3-4Q0-6 3-5.500M-3 1H3" stroke="#fff" strokeWidth="1.900" fill="none" /></Fav>
    <ESwirl /><ESwirl /><ESwirl /><ESwirl />
    <BarEnd>
      <svg width="10" height="10" viewBox="0 0 10 10" fill="none" stroke="currentColor" strokeWidth="1.500"><path d="M.8 1L4.600 5 .8 9M5.200 1L9 5 5.200 9" /></svg>
      <BarRule />
      <Folder><FolderIcon />All Bookmarks</Folder>
    </BarEnd>
  </BookmarkBar>
);

/* ---------- data ---------- */

const NAV: { label: string; icon: React.ComponentType<{ size?: number }> }[] = [
  { label: 'Dashboard', icon: House },
  { label: 'Jobs', icon: ClipboardList },
  { label: 'Photos', icon: Camera },
  { label: 'Schedule', icon: Calendar },
  { label: 'Route', icon: MapIcon },
  { label: 'Builders', icon: BuildingIcon },
  { label: 'Plans', icon: FilesIcon },
  { label: 'Equipment', icon: Package },
  { label: 'Quality Assurance', icon: Award },
  { label: 'Achievements', icon: Trophy },
  { label: 'Challenges', icon: Target },
  { label: 'Financials', icon: DollarSign },
  { label: '45L Tax Credits', icon: ReceiptIcon },
  { label: 'Reports', icon: FileText },
  { label: 'Report Templates', icon: FileText },
  { label: 'Analytics', icon: ChartColumn },
  { label: 'Settings', icon: Settings },
];

const EVENTS = [
  { time: '9:00 AM - 9:45 AM', place: '2750 Kepler Avenue NE, St. Michael MN' },
  { time: '10:00 AM - 10:45 AM', place: '14553 107th Place N, Maple Grove MN' },
  { time: '11:00 AM - 11:45 AM', place: '10324 Birchwood Circle, Victoria MN' },
  { time: '1:00 PM - 1:45 PM', place: '1524 Traverse Lane, West St. Paul MN' },
];

const HOVERED = 2;

/* ---------- sections ---------- */

const Browser = () => (
  <>
    <TabStrip>
      <TabSearch>
        <svg width="9" height="7" viewBox="0 0 9 7" fill="none" stroke="currentColor" strokeWidth="1.800"><path d="M.8 1.200L4.500 5 8.200 1.200" /></svg>
      </TabSearch>
      <TabBox $active>
        <Fav span={25.500}><Replit /></Fav>
        <TabTitle>fieldinspect.app/jobs</TabTitle>
        <Cross w={1.700} />
      </TabBox>
      <TabBox>
        <SentryBadge><SiSentry size={12.500} /></SentryBadge>
        <TabTitle>Sentry</TabTitle>
        <Cross w={1.600} />
      </TabBox>
      <StripDivider />
      <NewTab>
        <svg width="10" height="10" viewBox="0 0 10 10" stroke="currentColor" strokeWidth="1.500"><path d="M5 0v10M0 5h10" /></svg>
      </NewTab>
      <WindowControls>
        <Line w={12} h={12}><path d="M.5 11h11" strokeWidth="1.700" /></Line>
        <Line w={12} h={12}><path d="M4.800.9h6.400v6.600H4.800zM.9 4v7.200h6.800" strokeWidth="1.500" /></Line>
        <Cross s={11} w={1.400} />
      </WindowControls>
    </TabStrip>
    <Toolbar>
      <ToolSlot><MdArrowBack size={18} /></ToolSlot>
      <ToolSlot $dim><MdArrowForward size={18} /></ToolSlot>
      <ToolSlot><MdRefresh size={18} /></ToolSlot>
      <ToolSlot><HomeLine /></ToolSlot>
      <Omnibox>
        <SiteInfo><TuneLine /></SiteInfo>
        <Url>fieldinspect.app<span>/jobs</span></Url>
        <OmniActions><InstallLine /><MdStarBorder size={19} /></OmniActions>
      </Omnibox>
      <ToolSlot><PuzzleLine /></ToolSlot>
      <ToolDivider $w={17} />
      <ToolSlot><KeyLine /></ToolSlot>
      <ToolSlot><CardLine /></ToolSlot>
      <ToolSlot><PinLine /></ToolSlot>
      <ToolSlot><PrintLine /></ToolSlot>
      <ToolSlot><DevicesLine /></ToolSlot>
      <ToolSlot><TableLine /></ToolSlot>
      <ToolDivider $w={18} />
      <ToolSlot><MdMoreVert size={20} /></ToolSlot>
    </Toolbar>
    <Bookmarks />
  </>
);

const SideNav = () => (
  <Sidebar>
    <GroupLabel>Field Inspection System</GroupLabel>
    <NavList>
      {NAV.map(({ label, icon: Icon }) => (
        <NavItem key={label} $active={label === 'Jobs'}>
          <Icon size={16} />
          <span>{label}</span>
        </NavItem>
      ))}
    </NavList>
    <UserRow>
      <Avatar>SU</Avatar>
      <UserText>
        <NameLine>Shaun Ulrich<RoleTag>Inspector</RoleTag></NameLine>
        <Status><Wifi size={12} />Online</Status>
      </UserText>
    </UserRow>
    <NavItem><LogOut size={16} /><span>Logout</span></NavItem>
  </Sidebar>
);

const ShelfBar = () => (
  <Shelf>
    <Launcher>
      <svg width="17" height="17" viewBox="0 0 17 17"><circle cx="8.500" cy="8.500" r="7.500" fill="none" stroke="#8d8c8c" strokeWidth="1.300" /><circle cx="8.500" cy="8.500" r="5.200" fill="#e6e3e3" /></svg>
    </Launcher>
    <ShelfApps>
      <ShelfIcon><Doc c="#fbbc04" d="#f29900"><circle cy="-.5" r="3.300" fill="#fff" /><path d="M-1.800 3.500h3.600v1.200h-3.600z" fill="#fff" /></Doc></ShelfIcon>
      <ShelfIcon>
        <path d="M-6.800-8.800V8.800L2 0z" fill="#4285f4" /><path d="M-6.800-8.800q1-1.600 3-.4L5.500-3.700 2 0z" fill="#34a853" />
        <path d="M-6.800 8.800q1 1.600 3 .4L5.500 3.700 2 0z" fill="#ea4335" /><path d="M5.500-3.700L9.800-1.200Q11 0 9.800 1.200L5.500 3.700 2 0z" fill="#fbbc04" />
      </ShelfIcon>
      <ShelfIcon><MessagesMark /></ShelfIcon>
      <ShelfIcon><GmailMark /></ShelfIcon>
      <ShelfIcon><PhotosMark /></ShelfIcon>
      <ShelfIcon><CalendarMark day="31" /><circle cx="12" cy="-11.500" r="4" fill="#f28b82" /></ShelfIcon>
      <ShelfIcon><Doc c="#4285f4" d="#1967d2"><path d="M-4.600-2H4.600M-4.600 1H4.600M-4.600 4H2.500" stroke="#fff" strokeWidth="1.400" /></Doc></ShelfIcon>
      <ShelfIcon><Doc c="#34a853" d="#188038"><rect x="-5" y="-2.800" width="10" height="8" fill="#fff" /><path d="M-3.800-1.500h3v2h-3zM.8-1.500h3v2h-3zM-3.800 2h3v2h-3zM.8 2h3v2h-3z" fill="#34a853" /></Doc></ShelfIcon>
      <ShelfIcon><DriveMark /></ShelfIcon>
      <ShelfIcon><HomeMark id="sh" /></ShelfIcon>
      <ShelfIcon><StarMark id="ss" /></ShelfIcon>
      <ShelfIcon><g transform="translate(-10.500,-10.500)"><RiOpenaiFill size={21} color="#000" /></g></ShelfIcon>
      <ShelfIcon bg="#191919">
        <path d="M0-10.800V10.800M-5.500-9.800L0-4.500 5.500-9.800V-4.500M-5.500-9.800V-4.500H9.300V4.500H5.500V9.800L0 4.500-5.500 9.800V4.500H-9.300V-4.500H-5.500M0-4.500L-5.500 1V4.500M0-4.500L5.500 1V4.500" fill="none" stroke="#f2f2f2" strokeWidth="1.200" />
      </ShelfIcon>
      <ShelfIcon mark={13}><ChromeMark /></ShelfIcon>
      <ShelfIcon><StoreMark /></ShelfIcon>
      <ShelfIcon bg="#0e1525" mark={7.500}><Replit /></ShelfIcon>
      <ShelfIcon bg="#131420">
        <g transform="translate(-10.300,-10.600)"><SiTiktok size={20} color="#25f4ee" /></g>
        <g transform="translate(-9,-9.600)"><SiTiktok size={20} color="#fe2c55" /></g>
        <g transform="translate(-9.700,-10.100)"><SiTiktok size={20} color="#fff" /></g>
      </ShelfIcon>
      <ShelfIcon bg="#ff8c0a">
        <path d="M-6.500 1.300h13l3.300 7q.4 1-.8 1h-18q-1.200 0-.8-1z" fill="#fff" /><path d="M-9.800 9h19.600v1.400h-19.600z" fill="#c55a00" />
        <path d="M-4.800-.5Q0 2 4.800-.5L6 2.500Q0 6-6 2.500z" fill="#ff8008" />
        <path d="M-1.600-11Q0-13.500 1.600-11L2.400-8.500Q0-7.500-2.400-8.500zM-3.200-5.200Q0-4 3.200-5.200L4.500-1Q0 1-4.500-1z" fill="#fff" />
      </ShelfIcon>
      <ShelfIcon><rect x="-12" y="-9" width="24" height="15.500" rx=".8" fill="#f00" /><path d="M-7.500 7.200h15v1.600h-15z" fill="#f00" /><path d="M-2.700-4.500L3.500-1.200-2.700 2.200z" fill="#fff" /></ShelfIcon>
    </ShelfApps>
    <Tray>
      <TrayCircle $gap={4}>
        <svg width="33" height="33" viewBox="-16.500 -16.500 33 33">
          <circle r="16.200" fill="#fafafa" />
          <path d="M-5-10.500h6M-5-8h2M3-8h4M-5-5h2M-1-5h2M10-5h4M-4-3.400h2M3-3.400h2M9-3.400h2M-16-3.400h5" stroke="#b4b6ba" strokeWidth=".8" />
        </svg>
      </TrayCircle>
      <TrayCircle $gap={4}>
        <svg width="12" height="18" viewBox="0 0 12 18"><rect x=".9" y=".9" width="10.200" height="16.200" rx="1.600" fill="none" stroke="currentColor" strokeWidth="1.800" /><path d="M1 3.400h10M1 14.600h10" stroke="currentColor" strokeWidth="1.800" /></svg>
      </TrayCircle>
      <TrayPill $w={42} $left><Count>3</Count></TrayPill>
      <TrayPill $w={67}>Oct 27</TrayPill>
      <TrayPill $w={95.500} $right>
        8:26
        <svg width="16" height="13" viewBox="0 0 16 13"><path d="M8 13L0 3Q8-3 16 3z" fill="currentColor" /></svg>
        <svg width="10" height="15" viewBox="0 0 10 15"><path d="M2.500 1.500V0h3.500v1.500H7.500q1 0 1 1V9.500q-4 0-4 4H1q-1 0-1-1V2.500q0-1 1-1z" fill="currentColor" /><path d="M5 13q.3-2.500 2.300-1.300T9.600 14.500" fill="none" stroke="currentColor" strokeWidth="1.500" /></svg>
      </TrayPill>
    </Tray>
  </Shelf>
);

export default function App() {
  return (
    <Screen>
      <GlobalStyle />
      <Browser />
      <Page>
        <SideNav />
        <Main>
          <TopBar>
            <PanelLeft size={16} />
            <TopActions>
              <BellSlot><Bell size={16} /></BellSlot>
              <Connection><Wifi size={16} /></Connection>
              <Eye size={16} />
            </TopActions>
          </TopBar>
          <Body>
            <TitleRow>
              <Title>Jobs</Title>
              <OnlineTag><Wifi size={12} />Online</OnlineTag>
              <Button><Download size={16} />Export</Button>
              <Button $primary><Plus size={16} />Create Job</Button>
            </TitleRow>
            <Panel>
              <PanelHead>
                <Calendar size={20} color={BLUE} />
                <PanelTitles>
                  <h2>Planned Events</h2>
                  <p>From your calendar (6 events)</p>
                </PanelTitles>
                <ChevronUp size={16} />
              </PanelHead>
              <EventList>
                {EVENTS.map((e, i) => (
                  <EventCard key={e.time} $hover={i === HOVERED}>
                    <div>
                      <EventTitle>Untitled Event</EventTitle>
                      <EventMeta><Clock size={16} />{e.time}</EventMeta>
                      <EventMeta><MapPin size={16} />{e.place}</EventMeta>
                    </div>
                    <EventSide>
                      <Pill $hover={i === HOVERED} />
                      <Button $small $pressed={i === HOVERED}><PlayCircle />Start Job</Button>
                    </EventSide>
                  </EventCard>
                ))}
                <EventCard>
                  <EventTitle>Untitled Event</EventTitle>
                  <EventSide><Pill /></EventSide>
                </EventCard>
              </EventList>
            </Panel>
          </Body>
        </Main>
        <Toast>
          <strong>Failed to create job</strong>
          <span>invalid csrf token</span>
        </Toast>
      </Page>
      <ShelfBar />
    </Screen>
  );
}
